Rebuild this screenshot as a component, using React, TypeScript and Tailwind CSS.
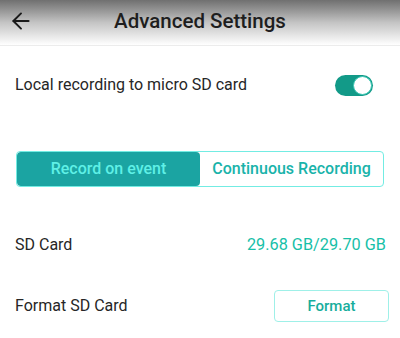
import { ArrowLeft } from "lucide-react";

const App = () => {
  return (
    <div
      className="w-[400px] h-[338px] bg-white overflow-hidden text-[#222]"
      style={{ fontFamily: "Roboto, 'Noto Sans', sans-serif" }}
    >
      {/* Header */}
      <div className="h-[46px] bg-gradient-to-b from-[#707070] via-[#c4c4c4] to-white flex items-center relative border-b border-[#ececec]">
        <ArrowLeft className="absolute left-[8px] top-[8px] w-[26px] h-[26px] text-[#1a1a1a]" strokeWidth={1.8} />
        <div className="flex-1 text-center text-[20.5px] font-medium text-[#1e1e1e] -mt-[3px]">
          Advanced Settings
        </div>
      </div>

      {/* Local recording */}
      <div className="flex items-center justify-between pl-[15px] pr-[27px] mt-[24px] h-[30px]">
        <span className="text-[16px] text-[#262626]">Local recording to micro SD card</span>
        <div className="w-[38px] h-[21px] rounded-full bg-[#129a88] flex items-center justify-end pr-[1px]">
          <div className="w-[19px] h-[19px] rounded-full bg-white border border-[#3cc7b4]" />
        </div>
      </div>

      {/* Segmented control */}
      <div className="mx-[16px] mt-[51px] h-[36px] flex rounded-[4px] border border-[#73ece3] overflow-hidden">
        <div className="w-[183px] bg-[#1ba4a2] rounded-[4px] flex items-center justify-center text-[16px] font-medium text-[#5ff0e6]">
          Record on event
        </div>
        <div className="flex-1 flex items-center justify-center text-[16px] font-medium text-[#19b3aa]">
          Continuous Recording
        </div>
      </div>

      {/* SD Card */}
      <div className="flex items-center justify-between pl-[15px] pr-[14px] mt-[47px] h-[22px]">
        <span className="text-[16px] text-[#262626]">SD Card</span>
        <span className="text-[16.3px] text-[#17c0a8]">29.68 GB/29.70 GB</span>
      </div>

      {/* Format SD Card */}
      <div className="flex items-center justify-between pl-[15px] pr-[11px] mt-[34px]">
        <span className="text-[16px] text-[#262626]">Format SD Card</span>
        <button className="w-[115px] h-[32px] rounded-[4px] border border-[#9ff0e8] text-[15px] font-medium text-[#17ad9c] bg-white">
          Format
        </button>
      </div>
    </div>
  );
};

export default App;
